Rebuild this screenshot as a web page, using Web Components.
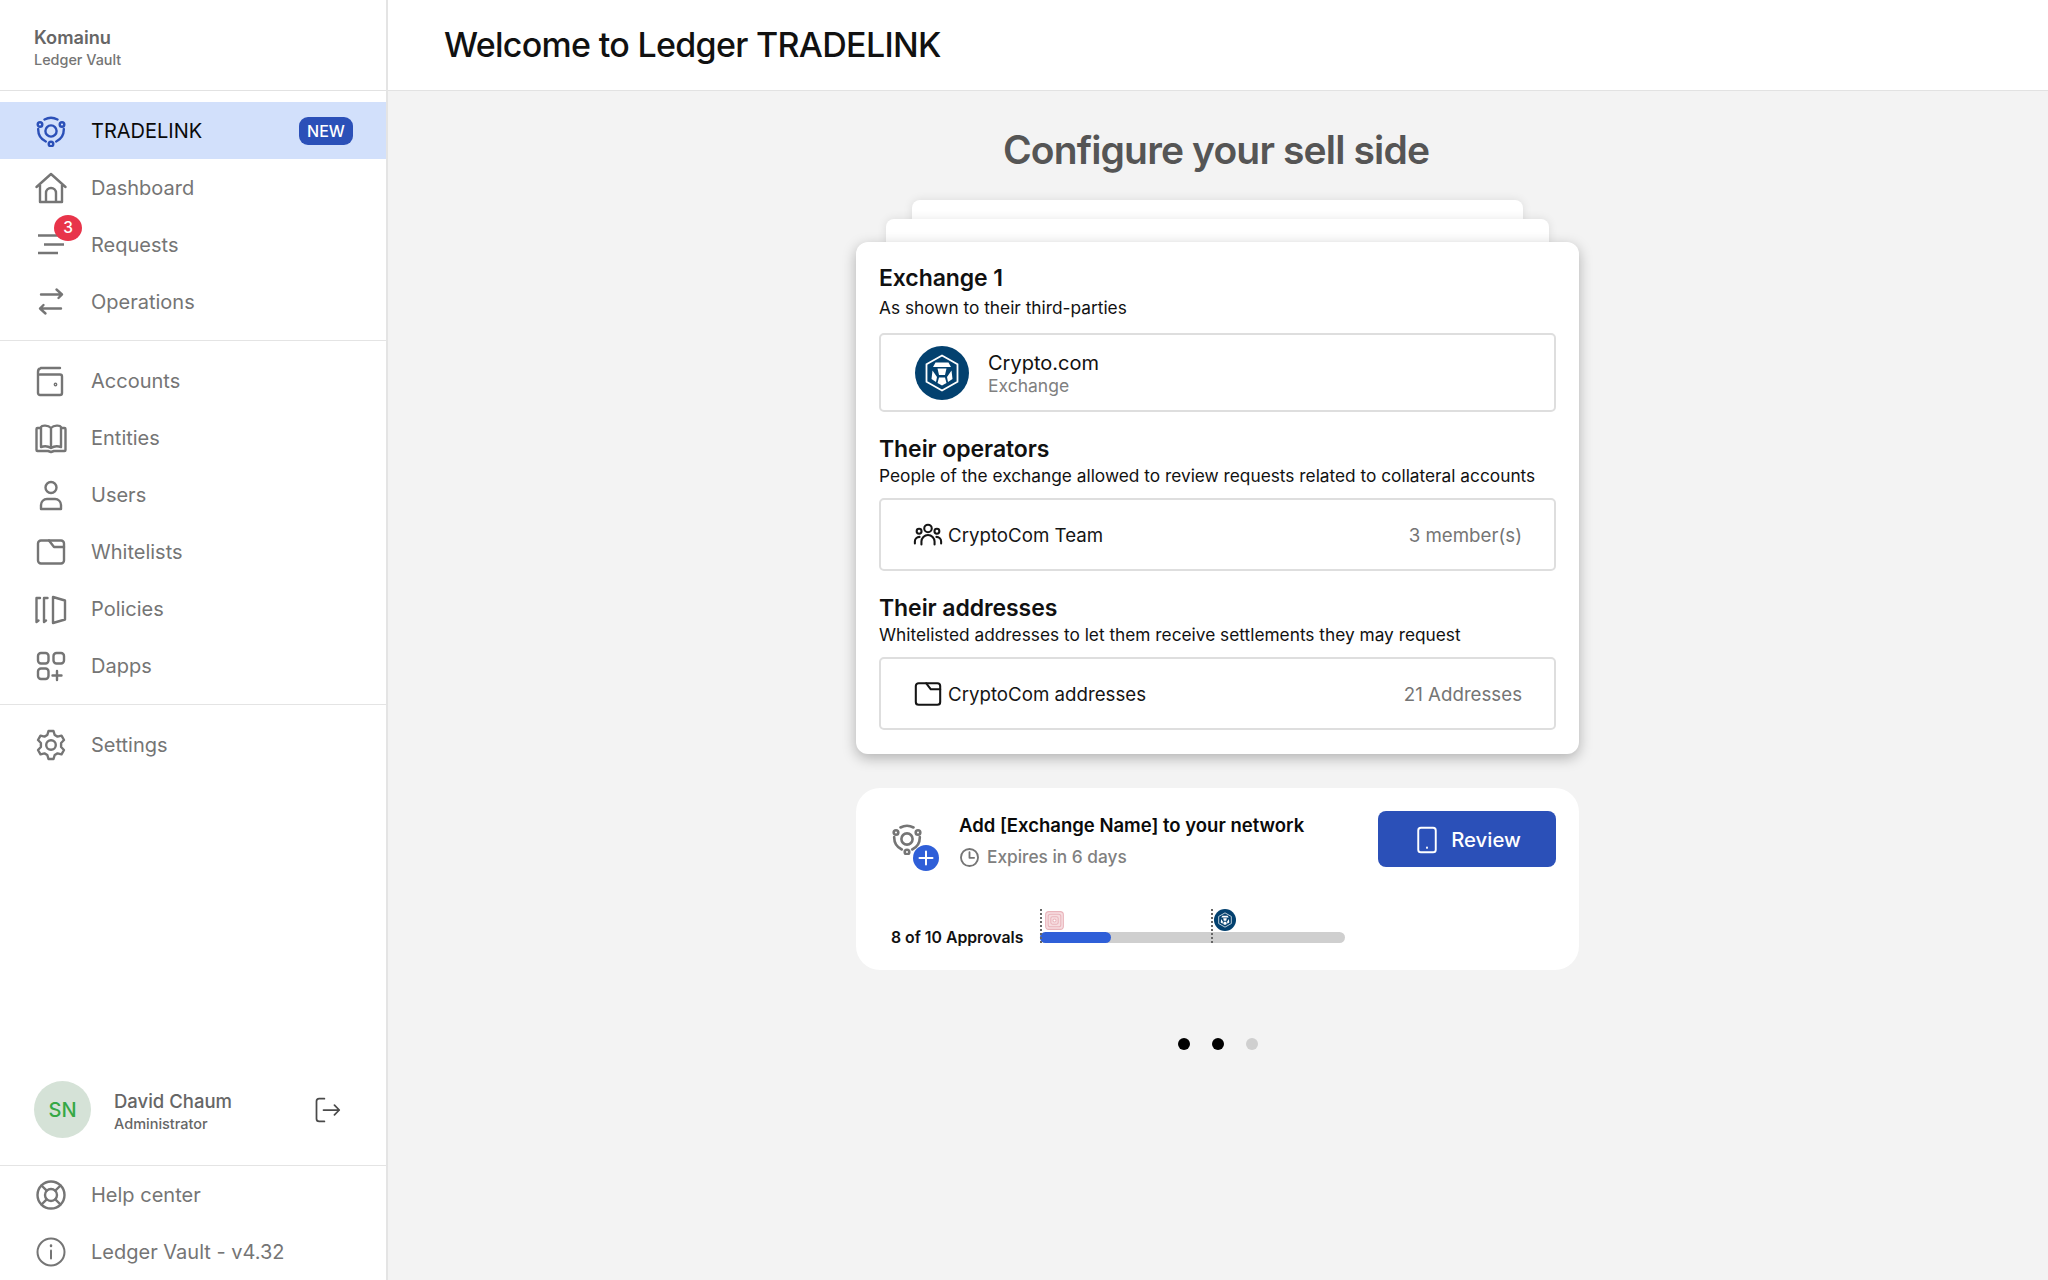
<!DOCTYPE html>
<html lang="en"><head><meta charset="utf-8"><title>Ledger TRADELINK</title>
<style>
html,body{margin:0;height:100%;background:#f3f3f3;font-family:Inter,"Liberation Sans",sans-serif}
</style></head><body>
<app-shell>
  <side-nav slot="side"></side-nav>
  <top-bar slot="top">Welcome to Ledger TRADELINK</top-bar>
  <sell-setup slot="main"></sell-setup>
</app-shell>
<script>
const I={
tradelink:'<circle cx="16" cy="16" r="5.6"/><circle cx="5" cy="9.5" r="2.3"/><circle cx="27" cy="9.5" r="2.3"/><circle cx="16" cy="29" r="2.3"/><path d="M9.5 4.5a14 14 0 0 1 13 0M3.2 14a13.5 13.5 0 0 0 7.6 12.5M28.8 14a13.5 13.5 0 0 1-7.6 12.5"/>',
home:'<path d="M1.5 15 16 2l14.500 13M5 12v18h22V12M11 30V21a5 5 0 0 1 10 0v9"/>',
requests:'<path d="M3 6.500h25M9 15.500h20M3 24h20" stroke-width="2.6" stroke-linecap="butt"/>',
ops:'<path d="M6 8.500h21M21.500 3.500 27 8.500l-3.500 3.500M26 22.500H5M10.500 27.500 5 22.500 8.500 19"/>',
wallet:'<path d="M6 3h19M5 9.500h20a2 2 0 0 1 2 2V28a2 2 0 0 1-2 2H5a2 2 0 0 1-2-2V7a4 4 0 0 1 3-4M3 9.500V28"/><circle cx="20.500" cy="19.500" r=".7"/>',
book:'<path d="M6 5v20c3-1 7-1 10 1 3-2 7-2 10-1V5c-1-2-7-2-10 1-3-3-9-3-10-1ZM16 6v20M6 6H2.500a1 1 0 0 0-1 1v21a1 1 0 0 0 1 1H13l3 1 3-1h10.500a1 1 0 0 0 1-1V7a1 1 0 0 0-1-1H26"/>',
user:'<circle cx="16" cy="8.500" r="5.500"/><path d="M6 30v-4a6 6 0 0 1 6-6h8a6 6 0 0 1 6 6v4Z"/>',
folder:'<rect x="3" y="4.500" width="26" height="23" rx="3"/><path d="M14 4.500l5 6.500h10"/>',
policies:'<path d="M5 5H1.500v24l2-1.500M12.500 5H9v24l2-1.500M18 4v26l12-3.500V7.500Z"/>',
dapps:'<path d="M22 21v9M17.500 25.500H26.500"/><rect x="3" y="3" width="10.500" height="10.500" rx="3"/><rect x="18.500" y="3" width="10.500" height="10.500" rx="3"/><rect x="3" y="18.500" width="10.500" height="10.500" rx="3"/>',
gear:'<circle cx="16" cy="16" r="4.800"/><path d="M13.500 2h5l1.200 4 2.800 1.600 4-1 2.500 4.400-2.900 3v4l2.900 3-2.500 4.400-4-1-2.800 1.600-1.200 4h-5l-1.200-4-2.800-1.600-4 1L3 21l2.900-3v-4L3 11l2.500-4.400 4 1L12.300 6Z" stroke-linejoin="round"/>',
help:'<circle cx="16" cy="16" r="13.500"/><circle cx="16" cy="16" r="6"/><path d="M6.500 6.500l5.200 5.200M25.500 6.500l-5.200 5.200M6.500 25.500l5.200-5.200M25.500 25.500l-5.200-5.200"/>',
info:'<circle cx="16" cy="16" r="13.500" stroke-width="2"/><path d="M16 14.500v8" stroke-width="2"/><path d="M16 9.500v.5" stroke-width="2.500"/>',
logout:'<path d="M13 3H7a3 3 0 0 0-3 3v20a3 3 0 0 0 3 3h6M12 16h18M24.500 10.500 30 16l-5.500 5.500"/>',
team:'<circle cx="16" cy="9" r="4"/><circle cx="6.500" cy="12" r="2.600"/><circle cx="25.500" cy="12" r="2.600"/><path d="M9 26v-3a7 7 0 0 1 14 0v3M2 25v-2a5 5 0 0 1 5-5M30 25v-2a5 5 0 0 0-5-5"/>',
clock:'<circle cx="16" cy="16" r="13"/><path d="M16 8v8.500h7"/>',
tablet:'<rect x="6" y="2" width="20" height="28" rx="3"/><path d="M16 24.500v.5"/>'
};
const svg=(n,s=32,w=2.4)=>`<svg width="${s}" height="${s}" viewBox="0 0 32 32" fill="none" stroke="currentColor" stroke-width="${w}" stroke-linecap="round" stroke-linejoin="round" aria-hidden="true">${I[n]}</svg>`;
const logo=s=>`<svg width="${s}" height="${s}" viewBox="0 0 54 54" aria-hidden="true"><circle cx="27" cy="27" r="27" fill="#03416f"/><path d="M27 9.500 42.500 18.300v17.400L27 44.500 11.500 35.700V18.300Z" fill="none" stroke="#fff" stroke-width="1.800"/><path d="M20.500 16.500h13l2.500 4.500H18Z" fill="#fff"/><path d="M22.500 22.500h9l-1.500 6.500h-6ZM17.500 24.500l4.500 6.500-1 5-4.500-3ZM36.500 24.500l-4.500 6.500 1 5 4.500-3ZM24 31.500h6l1.500 5.500-4.500 2.500-4.500-2.500Z" fill="#fff"/></svg>`;
class Base extends HTMLElement{
  render(css,html){const r=this.shadowRoot||this.attachShadow({mode:'open'});r.innerHTML=`<style>${css}</style>${html}`;}
}
class AppShell extends Base{connectedCallback(){this.render(`
:host{display:grid;grid-template-columns:388px 1fr;grid-template-rows:91px 1fr;height:1280px;overflow:hidden}
.s{grid-row:1/3;display:flex;min-height:0}
::slotted([slot=side]){flex:1}
`,`<div class="s"><slot name="side"></slot></div><slot name="top"></slot><slot name="main"></slot>`)}}
class TopBar extends Base{connectedCallback(){this.render(`
:host{display:flex;align-items:center;background:#fff;border-bottom:1px solid #e2e2e2;box-sizing:border-box;padding:0 0 1px 56px;font-size:34px;font-weight:500;color:#111;letter-spacing:-.7px}
`,`<slot></slot>`)}}
class NavItem extends Base{connectedCallback(){
 const a=this.hasAttribute('active');
 this.render(`
:host{display:flex;align-items:center;height:57px;padding:0 33px 0 35px;gap:24px;font-size:20px;color:#757575;background:${a?'#d2e0fb':'transparent'}}
:host([active]){color:#0a0a0a}
.i{display:flex;width:32px;height:32px;position:relative;color:${a?'#2b50b8':'#757575'}}
.t{flex:1}
.tag{background:#2b50b8;color:#fff;font-size:16px;font-weight:500;border-radius:9px;height:28px;width:54px;display:flex;align-items:center;justify-content:center}
.b{position:absolute;left:19px;top:-14px;width:28px;height:26px;border-radius:50%;background:#e8344a;color:#fff;font-size:15.500px;font-weight:500;display:flex;align-items:center;justify-content:center}
`,`<span class="i">${svg(this.getAttribute('icon'),32,this.getAttribute('icon')=='info'?2:2.400)}${this.dataset.badge?`<span class="b">${this.dataset.badge}</span>`:''}</span><span class="t"><slot></slot></span>${this.dataset.tag?`<span class="tag">${this.dataset.tag}</span>`:''}`)}}
customElements.define('nav-item',NavItem);
class SideNav extends Base{connectedCallback(){this.render(`
:host{display:flex;flex-direction:column;background:#fff;border-right:2px solid #e4e4e4;box-sizing:border-box;height:1280px}
.h{height:91px;border-bottom:1px solid #e2e2e2;box-sizing:border-box;padding:26px 0 0 34px}
.h b{display:block;font-size:18.200px;font-weight:600;color:#666;line-height:22px}
.h span{display:block;font-size:14.400px;font-weight:500;color:#757575;line-height:20px;margin-top:2px}
.g{padding:11px 0 10px;border-bottom:1.500px solid #e4e4e4}
.g.l{border:0;flex:1}
.u{display:flex;align-items:center;padding:0 34px 27px;color:#666}
.av{width:57px;height:57px;border-radius:50%;background:#d5e2d7;color:#35a845;font-size:20px;font-weight:500;display:flex;align-items:center;justify-content:center;flex:none}
.n{margin-left:23px;flex:1;padding-top:4px}
.n b{display:block;font-size:18.500px;font-weight:500;line-height:24px}
.n span{display:block;font-size:14.500px;font-weight:500;line-height:20px;margin-top:1px}
.o{display:flex;color:#4a4a4a;margin-right:11px}
.f{border-top:1.500px solid #e4e4e4}
`,`<div class="h"><b>Komainu</b><span>Ledger Vault</span></div>
<div class="g"><nav-item icon="tradelink" active data-tag="NEW">TRADELINK</nav-item><nav-item icon="home">Dashboard</nav-item><nav-item icon="requests" data-badge="3">Requests</nav-item><nav-item icon="ops">Operations</nav-item></div>
<div class="g"><nav-item icon="wallet">Accounts</nav-item><nav-item icon="book">Entities</nav-item><nav-item icon="user">Users</nav-item><nav-item icon="folder">Whitelists</nav-item><nav-item icon="policies">Policies</nav-item><nav-item icon="dapps">Dapps</nav-item></div>
<div class="g l"><nav-item icon="gear">Settings</nav-item></div>
<div class="u"><span class="av">SN</span><span class="n"><b>David Chaum</b><span>Administrator</span></span><span class="o">${svg('logout',28,2)}</span></div>
<div class="f"><nav-item icon="help">Help center</nav-item><nav-item icon="info">Ledger Vault - v4.32</nav-item></div>`)}}
class InfoRow extends Base{connectedCallback(){this.render(`
:host{display:flex;align-items:center;height:73px;box-sizing:border-box;border:2px solid #dedede;border-radius:5px;background:#fff;padding:0 32px 0 32px;font-size:18.700px;color:#151515}
.i{display:flex;margin-right:5px}
.t{flex:1;padding-top:1px}
.r{color:#757575;padding-top:1px}
`,`<span class="i">${svg(this.getAttribute('icon'),30,2.200)}</span><span class="t"><slot></slot></span><span class="r"><slot name="right"></slot></span>`)}}
customElements.define('info-row',InfoRow);
class ExchangeRow extends Base{connectedCallback(){this.render(`
:host{display:flex;align-items:center;height:79px;box-sizing:border-box;border:2px solid #dedede;border-radius:5px;padding-left:34px;gap:19px}
.l{display:flex}
b{display:block;font-weight:400;font-size:20px;line-height:25px;padding-top:1px;color:#111}
span.s{display:block;font-size:17.500px;line-height:19px;color:#808080}
`,`<span class="l">${logo(54)}</span><span><b>Crypto.com</b><span class="s">Exchange</span></span>`)}}
customElements.define('exchange-row',ExchangeRow);
class CardSection extends Base{connectedCallback(){const first=this.hasAttribute('first');this.render(`
:host{display:block;margin-top:${first?0:22}px}
h3{margin:0;font-size:23px;font-weight:600;line-height:30px;color:#111;letter-spacing:-.08px}
p{margin:${first?3:0}px 0 ${first?13:10}px;font-size:17.300px;line-height:24px;color:#111}
`,`<h3>${this.dataset.title}</h3><p>${this.dataset.sub}</p><slot></slot>`)}}
customElements.define('card-section',CardSection);
class ProgressBar extends Base{connectedCallback(){this.render(`
:host{display:block;position:relative;width:305px;height:34px;margin-left:17px}
.t{position:absolute;left:0;right:0;bottom:0;height:11px;border-radius:6px;background:#cfcfcf}
.v{position:absolute;left:0;bottom:0;height:11px;width:71px;border-radius:6px;background:#2f5fd8}
.d{position:absolute;top:0;bottom:0;width:1.500px;background:repeating-linear-gradient(#666 0 2px,transparent 2px 4px)}
.m{position:absolute;display:flex}
`,`<div class="t"></div><div class="v"></div><div class="d" style="left:0"></div><div class="d" style="left:171px"></div>
<svg class="m" style="left:5px;top:2px" width="19" height="19" viewBox="0 0 18 18" fill="none" stroke="#e9b4bb" stroke-width="1"><rect x=".6" y=".6" width="16.800" height="16.800" rx="3" fill="#f6dde0"/><rect x="3" y="3" width="12" height="12" rx="2"/><rect x="5.500" y="5.500" width="7" height="7" rx="1.500"/><circle cx="9" cy="9" r="1.500" fill="#fff"/></svg>
<span class="m" style="left:174px;top:0">${logo(22)}</span>`)}}
customElements.define('progress-bar',ProgressBar);
class ReviewPanel extends Base{connectedCallback(){this.render(`
:host{display:block;box-sizing:border-box;height:182px;background:#fff;border-radius:24px;padding:23px}
.top{display:flex;align-items:flex-start}
.ic{position:relative;width:48px;height:50px;margin:12px 0 0 12px;color:#757575;flex:none}
.plus{position:absolute;left:22px;top:22px;width:26px;height:26px;border-radius:50%;background:#2f5fd8;color:#fff;display:flex}
.tx{flex:1;margin-left:20px}
.tt{font-size:18.500px;font-weight:600;line-height:24px;margin-top:2px;color:#0a0a0a}
.ex{display:flex;align-items:center;gap:7px;font-size:17.300px;font-weight:500;color:#808080;line-height:24px;margin-top:8px}
.ex span{display:flex;color:#757575}
button{all:unset;box-sizing:border-box;width:178px;height:56px;background:#2b50b8;border-radius:8px;color:#fff;font:500 20.300px Inter,"Liberation Sans",sans-serif;display:flex;align-items:center;justify-content:center;gap:10px;padding-top:1px}
button span{display:flex}
.bot{display:flex;align-items:flex-end;margin-top:36px;padding-left:12px}
.lb{font-size:15.800px;font-weight:600;line-height:19px;color:#111;margin-bottom:-4px}
`,`<div class="top"><div class="ic">${svg('tradelink',32,2.600)}<span class="plus"><svg width="26" height="26" viewBox="0 0 26 26" fill="none" stroke="#fff" stroke-width="2" stroke-linecap="round"><path d="M13 6.500v13M6.500 13h13"/></svg></span></div>
<div class="tx"><div class="tt">Add [Exchange Name] to your network</div><div class="ex"><span>${svg('clock',21,2.800)}</span>Expires in 6 days</div></div>
<button><span>${svg('tablet',28,2.200)}</span>Review</button></div>
<div class="bot"><div class="lb">8 of 10 Approvals</div><progress-bar></progress-bar></div>`)}}
customElements.define('review-panel',ReviewPanel);
class PageDots extends Base{connectedCallback(){this.render(`
:host{display:flex;justify-content:center;gap:22px;margin-top:68px}
i{width:12px;height:12px;border-radius:50%;background:#000}
i.o{background:#cfcfcf}
`,`<i></i><i></i><i class="o"></i>`)}}
customElements.define('page-dots',PageDots);
class SellSetup extends Base{connectedCallback(){this.render(`
:host{display:block;padding:35px 1px 0 0}
h1{margin:0 0 26px;padding-right:3px;font-size:39px;font-weight:600;line-height:48px;color:#555;text-align:center;letter-spacing:-.85px}
.deck{width:723px;margin:0 auto}
.sheet{height:40px;background:#fff;border-radius:8px 8px 0 0;margin:0 auto;box-shadow:0 0 10px rgba(0,0,0,.1)}
.a{width:611px;margin-bottom:-21px}
.b{width:663px;margin-bottom:-17px;position:relative}
.card{position:relative;background:#fff;border-radius:12px;height:512px;box-sizing:border-box;padding:21px 23px 0;box-shadow:0 4px 14px rgba(0,0,0,.28)}
review-panel{margin-top:34px}
`,`<h1>Configure your sell side</h1><div class="deck"><div class="sheet a"></div><div class="sheet b"></div>
<div class="card">
<card-section first data-title="Exchange 1" data-sub="As shown to their third-parties"><exchange-row></exchange-row></card-section>
<card-section data-title="Their operators" data-sub="People of the exchange allowed to review requests related to collateral accounts"><info-row icon="team">CryptoCom Team<span slot="right">3 member(s)</span></info-row></card-section>
<card-section data-title="Their addresses" data-sub="Whitelisted addresses to let them receive settlements they may request"><info-row icon="folder">CryptoCom addresses<span slot="right">21 Addresses</span></info-row></card-section>
</div>
<review-panel></review-panel><page-dots></page-dots></div>`)}}
customElements.define('app-shell',AppShell);
customElements.define('top-bar',TopBar);
customElements.define('side-nav',SideNav);
customElements.define('sell-setup',SellSetup);
</script>
</body></html>
